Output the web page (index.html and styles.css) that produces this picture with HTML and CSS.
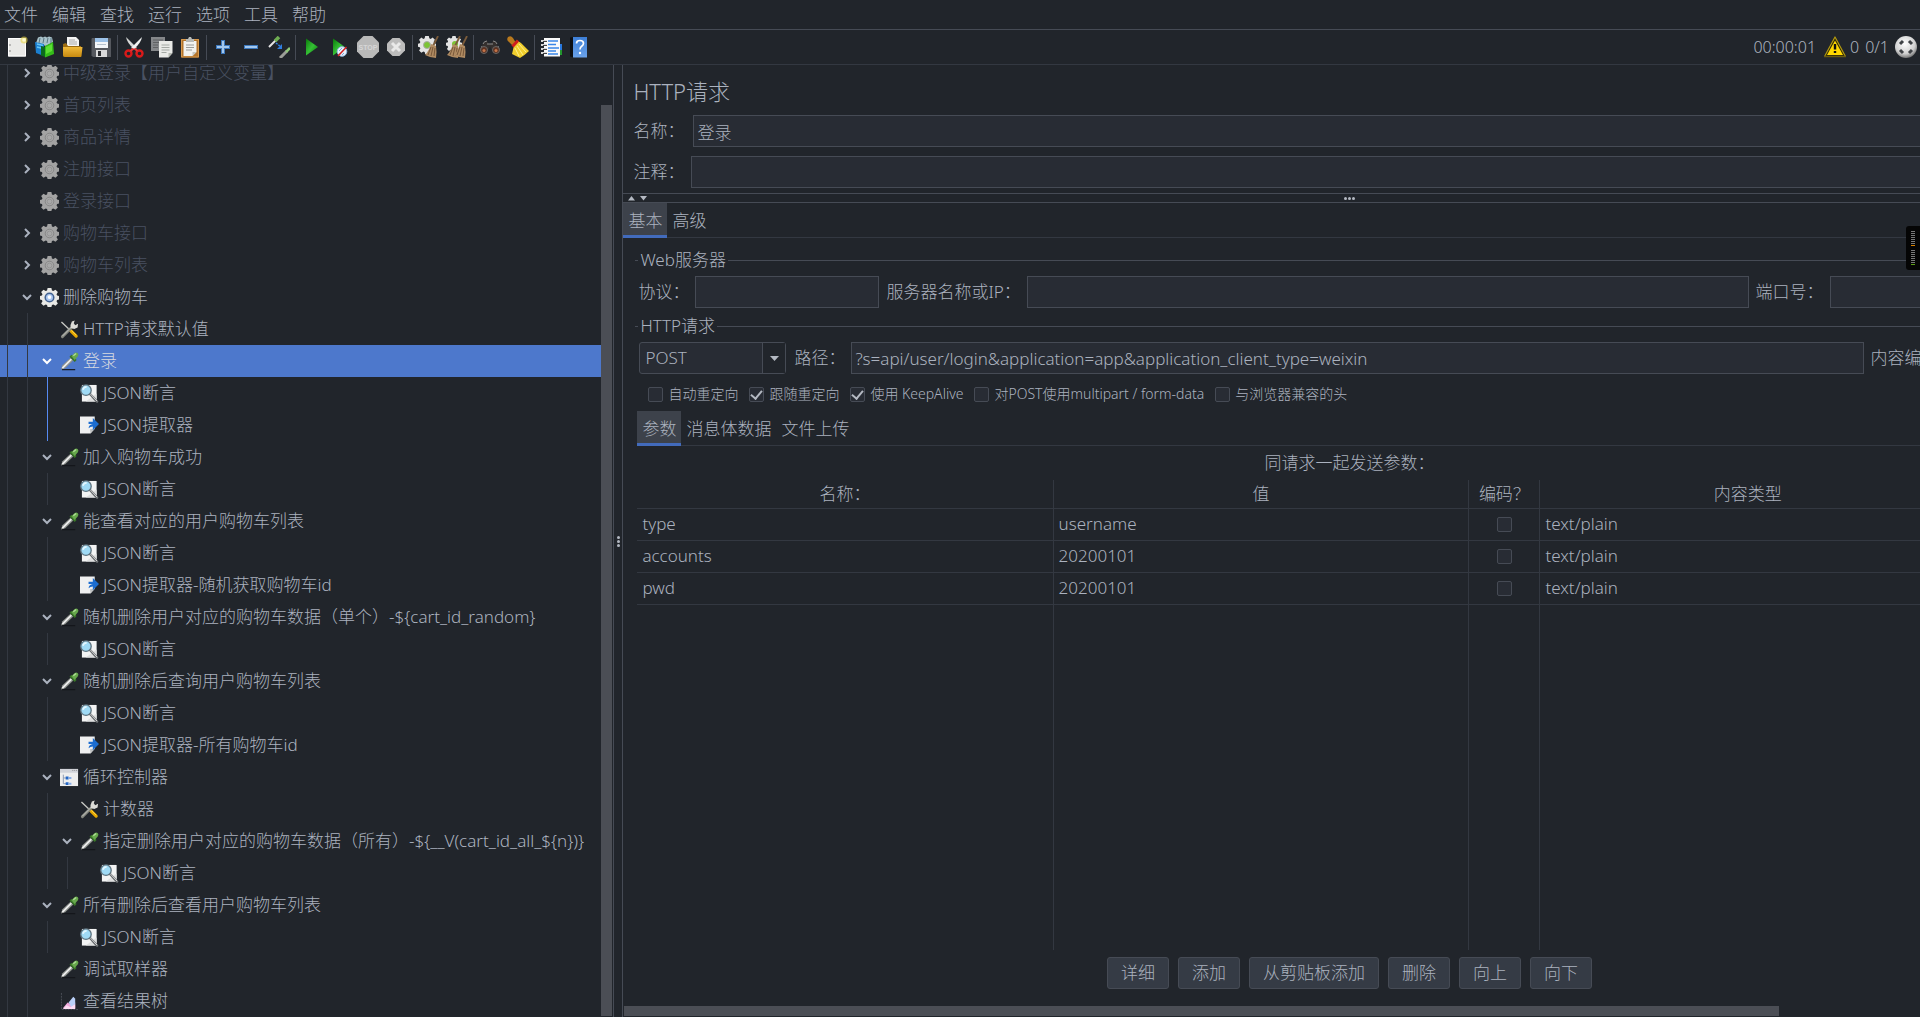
FILE: index.html
```html
<!DOCTYPE html>
<html lang="zh-CN">
<head>
<meta charset="utf-8">
<title>HTTP请求</title>
<link rel="stylesheet" href="styles.css">
</head>
<body>
<svg class="defs" aria-hidden="true">
  <defs>
    <linearGradient id="g-green" x1="0" y1="0" x2="1" y2="1"><stop offset="0" stop-color="#0a7a0a"/><stop offset=".5" stop-color="#35c035"/><stop offset="1" stop-color="#067506"/></linearGradient>
    <linearGradient id="g-blue" x1="0" y1="0" x2="0" y2="1"><stop offset="0" stop-color="#3d7fd6"/><stop offset="1" stop-color="#6aa2ea"/></linearGradient>
    <linearGradient id="g-gold" x1="0" y1="0" x2="0" y2="1"><stop offset="0" stop-color="#efb93a"/><stop offset="1" stop-color="#c78a10"/></linearGradient>
    <radialGradient id="g-ball" cx=".45" cy=".35" r=".65"><stop offset="0" stop-color="#fff"/><stop offset=".7" stop-color="#d0d0d0"/><stop offset="1" stop-color="#777"/></radialGradient>
    <symbol id="gear-shape" viewBox="0 0 20 20"><path d="M8 0h4l.6 2.600 1.400.6 2.300-1.400 2.500 2.500-1.400 2.300.6 1.400 2 .5v3.500l-2 .5-.6 1.400 1.400 2.300-2.500 2.500-2.300-1.400-1.400.6L12 20H8l-.6-2.100-1.400-.6-2.300 1.400-2.500-2.500 1.400-2.300-.6-1.400-2-.5V8.500L2 8l.6-1.400-1.400-2.300 2.500-2.500L6 3.200l1.400-.6z"/></symbol>
    <symbol id="i-gear-off" viewBox="0 0 20 20"><use href="#gear-shape" fill="#a3a3a3"/><circle cx="10" cy="10" r="4.500" fill="#a8a8a8" stroke="#858585"/><circle cx="10" cy="10" r="2.500" fill="none" stroke="#949494"/></symbol>
    <symbol id="i-gear" viewBox="0 0 20 20"><use href="#gear-shape" fill="#e9e9e6"/><circle cx="10" cy="10" r="4.500" fill="#a9c6f0" stroke="#42618f" stroke-width="1.600"/><circle cx="10" cy="9.500" r="2" fill="#fff"/></symbol>
    <symbol id="i-tools" viewBox="0 0 20 20"><path d="M1.500 2 11 11" stroke="#c9cac6" stroke-width="1.400"/><path d="m11.500 11.500 5.500 5.500" stroke="#e7a800" stroke-width="3.400" stroke-linecap="round"/><path d="m12 11 5 5" stroke="#ffd84a" stroke-width="1"/><path d="M2.500 17.500 13 7" stroke="#85877f" stroke-width="3" stroke-linecap="round"/><path d="M2.500 17 13 6.500" stroke="#c7c8c2" stroke-width="1"/><path d="m11 5.500 1.500-4 3-1-1 3 1.500 2 3-1.500-.5 4-3.500 1.500-3.500-1z" fill="#dcdcd8"/></symbol>
    <symbol id="i-pipette" viewBox="0 0 20 20"><path d="M2 18.600h14" stroke="#14161a" stroke-width="1.200"/><path d="M1 18.500 2.500 14 11 6l3 3-8.500 8z" fill="#8d918c"/><path d="m2.500 17 9.500-9.500" stroke="#eee" stroke-width="1.800"/><path d="m10 5 2-2 5.500 5.500-2 2z" fill="#377326"/><path d="m12 4.500 3.500-3.500q2-1 3.300.4 1.200 1.600 0 3.200L15.500 8.500z" fill="#67a84c"/><path d="m14 4 3-2.500" stroke="#b0dc98" stroke-width="1.400"/></symbol>
    <symbol id="i-assert" viewBox="0 0 20 20"><path d="M2 1h15.500v17.500H2z" fill="#f3f4f4"/><path d="M6 18.500 17.500 10v8.500z" fill="#dedfdf"/><path d="m10.500 10.500 7.500 8" stroke="#666a6d" stroke-width="2.600" stroke-linecap="round"/><path d="m11 10.500 7 7.500" stroke="#ddd" stroke-width="1"/><circle cx="6.300" cy="6.500" r="5.500" fill="#9fdaf5" stroke="#5f7480" stroke-width="1.400"/><path d="M3 6q1-3 4-3" stroke="#e4f7ff" stroke-width="1.800" fill="none"/></symbol>
    <symbol id="i-extract" viewBox="0 0 20 20"><path d="M0 .5h15.500v13L11 18.500H0z" fill="#eff0f0"/><path d="m15.500 13.500-4.500 5-.5-4.500z" fill="#bfc1c1"/><path d="M9 6h4.500V2l6.500 6.500-6.500 6.500v-4q-2.500 0-4.500 2 .5-4 4.500-4.500H9z" fill="#1c6dd0"/></symbol>
    <symbol id="i-loop" viewBox="0 0 20 20"><path d="M0 1h19v18H0z" fill="#eee"/><path d="M0 1h19v4H0z" fill="#d2d4da"/><path d="M13 2.500h1m1 0h1m1 0h1" stroke="#888"/><path d="M3.500 7v9.500h4M3.500 10.500h4" stroke="#8a99b3" fill="none"/><path d="M6 9h3v3H6zM6 15h3v3H6z" fill="#2467c5"/><path d="M9 10.500h3M9 16.500h3" stroke="#8aaee6" stroke-width="2"/></symbol>
    <symbol id="i-result" viewBox="0 0 20 20"><path d="M1.500 1v17.500H19" stroke="#4c5058" fill="none" stroke-dasharray="2 1"/><path d="m3 17 5-6 3 2 5-2v6z" fill="#f2a9dd"/><path d="m9 11 5-6 2 2v6l-4 3z" fill="#b9cff7"/><path d="m3 18 4-4 4 2 5-3v5z" fill="#fbdcf3"/></symbol>
    <symbol id="i-down" viewBox="0 0 14 14"><path d="m3 5 4 4 4-4" fill="none" stroke="currentColor" stroke-width="2"/></symbol>
    <symbol id="i-right" viewBox="0 0 14 14"><path d="m5 3 4 4-4 4" fill="none" stroke="currentColor" stroke-width="2"/></symbol>

    <symbol id="t-new" viewBox="0 0 22 22"><path d="M2 2h18v18.500H2z" fill="#e9e9e7"/><path d="M2.500 2.500h17v17.500h-17z" fill="none" stroke="#fff"/><path d="M4 8v2m0 4v2" stroke="#888"/><circle cx="18" cy="4" r="3.600" fill="#e9d74a" opacity=".6"/><circle cx="18" cy="4" r="1.800" fill="#fffbd0"/></symbol>
    <symbol id="t-templates" viewBox="0 0 22 22"><path d="M2 7 4 1.500l3-1 2 1 2-1 2 1 2-1 3 1 1 4.500-7 4z" fill="#a9c2ca"/><path d="m5 7 1-5m3 5 1-5m3 5 1-5m3 5V2" stroke="#5a7681"/><path d="M1 6l9 2v12L2 17z" fill="#1b7fd0"/><path d="m3 8 6 1.500M3 11l6 1.500" stroke="#66c5f5" stroke-width="1.500"/><path d="m7 10 4 1v10l-4-1.500z" fill="#0b6a1d"/><path d="m11 10 8-4 1 12-9 3.500z" fill="#35bd19"/><path d="m12 11 6-3v7l-6 3z" fill="#5ede35"/></symbol>
    <symbol id="t-open" viewBox="0 0 22 22"><path d="M5 1h9l3 3v9H5z" fill="#f4f4f4"/><path d="M7 4h6m-6 2h8m-8 2h8" stroke="#aaa"/><path d="M1 8l3-1 2 3h13v10q0 1-1 1H3q-2 0-2-2z" fill="#9c6c12"/><path d="M1 11h19.500l-1 9q0 1-1 1H3q-2 0-2-2z" fill="url(#g-gold)"/></symbol>
    <symbol id="t-save" viewBox="0 0 22 22"><path d="M2 2h18q1 0 1 1v18H3l-1.500-1.500V3z" fill="#55585e"/><path d="M5 2h13v10H5z" fill="#f3f6f9"/><path d="M5 2h13v4H5z" fill="#9cc2e8"/><path d="M7 8.500h9" stroke="#b7c3cf"/><path d="M6 14h11v7H6z" fill="#d9dadb"/><path d="M8 15h3v5H8z" fill="#2a2c30"/></symbol>
    <symbol id="t-cut" viewBox="0 0 22 22"><path d="M3 1q1 6 8 12l3-1Q8 6 3 1z" fill="#d7d9d8"/><path d="M19 1q-1 6-8 12l-3-1Q14 6 19 1z" fill="#f1f2f2"/><circle cx="5.500" cy="17.500" r="3" fill="none" stroke="#d81a1a" stroke-width="2.400"/><circle cx="16.500" cy="17.500" r="3" fill="none" stroke="#d81a1a" stroke-width="2.400"/><path d="m7.500 15 3-2.500m4 2.500-3-2.500" stroke="#e23434" stroke-width="2.200"/></symbol>
    <symbol id="t-copy" viewBox="0 0 22 22"><path d="M0 1h14v14H0z" fill="#85878a"/><path d="M2 4h10M2 6.500h6M2 9h5M2 11.500h5" stroke="#5f6163"/><path d="M8 5h13.500v12l-4 4.500H8z" fill="#e9eae7"/><path d="M10.500 9h8m-8 2.500h8m-8 2.500h8m-8 2.500h5" stroke="#a3a8a3"/><path d="m21.500 17-4 4.500V17z" fill="#b4b7b0"/></symbol>
    <symbol id="t-paste" viewBox="0 0 22 22"><path d="M2 3h18v18.500H2z" fill="#b4742a"/><path d="M2.500 3.500h17v17.500h-17z" fill="none" stroke="#d79a4f"/><path d="M4.500 5h13v11l-4 4h-9z" fill="#f2f2ef"/><path d="M7 9h8m-8 2.500h8M7 14h6" stroke="#9a9c99"/><path d="M7 3h2l1-2h2l1 2h2v3H7z" fill="#b9bbb8"/><path d="m17.500 16-4 4v-4z" fill="#c5c5bf"/></symbol>
    <symbol id="t-plus" viewBox="0 0 22 22"><path d="M9 4h4v5h5v4h-5v5H9v-5H4V9h5z" fill="#3c78bd"/><path d="M10 5h2v5h5v2h-5v5h-2v-5H5v-2h5z" fill="#a4c8ee"/></symbol>
    <symbol id="t-minus" viewBox="0 0 22 22"><path d="M4 9h14v4H4z" fill="#3c78bd"/><path d="M5 10h12v2H5z" fill="#a4c8ee"/></symbol>
    <symbol id="t-toggle" viewBox="0 0 22 22"><path d="m1 11 7-7" stroke="#e5e5e5" stroke-width="2"/><path d="m7 5 4-4" stroke="#6fae52" stroke-width="3.500"/><path d="m8 7 5 4" stroke="#2f7de0" stroke-width="1.500" stroke-dasharray="2 1"/><path d="m14 8v5H9z" fill="#2f7de0"/><path d="m12 22 7-7" stroke="#9b9d98" stroke-width="3"/><path d="m18 16 4-4" stroke="#8fc67a" stroke-width="2.500"/></symbol>
    <symbol id="t-play" viewBox="0 0 22 22"><path d="M5 2.500 17 11 5 19.500z" fill="url(#g-green)"/></symbol>
    <symbol id="t-playskip" viewBox="0 0 22 22"><path d="M4 2.500 16 11 4 19.500z" fill="url(#g-green)"/><circle cx="13" cy="15.500" r="4.800" fill="#e9f1fa" stroke="#8fb6df"/><path d="m9 20 8.500-9" stroke="#d32121" stroke-width="1.600"/><path d="m13 12-3 3m5 2-2 2" stroke="#7ba7db"/></symbol>
    <symbol id="t-stop" viewBox="0 0 22 22"><path d="M6.500 0h9L22 6.500v9L15.500 22h-9L0 15.500v-9z" fill="#b9b9b9"/><text x="11" y="14" text-anchor="middle" class="stop-text">STOP</text></symbol>
    <symbol id="t-shutdown" viewBox="0 0 22 22"><path d="M7.500 2h7L20 7.500v7L14.500 20h-7L2 14.500v-7z" fill="#bcbcbc"/><path d="m7 7 8 8m0-8-8 8" stroke="#e9e9e9" stroke-width="3"/></symbol>
    <symbol id="broom-head" viewBox="0 0 14 22"><path d="m13 0-5 10" stroke="#7b5b3a" stroke-width="1.800"/><path d="m6 8 5 2q1 6 0 12l-6-1-5-2q4-4 6-11z" fill="#b08b62"/><path d="m6 11-3 8m5-8-2 9m4-8-1 8" stroke="#78583a"/></symbol>
    <symbol id="t-clear" viewBox="0 0 22 22"><use href="#gear-shape" width="18" height="18" fill="#e4e4e4"/><circle cx="9" cy="9" r="3.500" fill="#7cc435" stroke="#aaa"/><use href="#broom-head" x="7" width="14" height="22"/></symbol>
    <symbol id="t-clearall" viewBox="0 0 22 22"><use href="#gear-shape" width="16" height="16" fill="#e4e4e4"/><circle cx="9" cy="8" r="3" fill="#7cc435"/><use href="#broom-head" x="1" width="14" height="22"/><use href="#broom-head" x="8" width="14" height="22"/></symbol>
    <symbol id="t-search" viewBox="0 0 22 22"><path d="m5 6 3-1 2 3h2l2-3 3 1 3 7-4 3-4-3-1-3-1 3-4 3-5-3z" fill="#35302e"/><path d="M4 8q1-3 4-3m10 3q-1-3-4-3M8 8h6M3 10l-1 3m17-3 1 3" stroke="#8c8c8c" fill="none"/><circle cx="5" cy="14" r="3.500" fill="#5b3222" stroke="#666"/><circle cx="17" cy="14" r="3.500" fill="#5b3222" stroke="#666"/><circle cx="5" cy="14.500" r="1.500" fill="#c5754a"/><circle cx="17" cy="14.500" r="1.500" fill="#c5754a"/></symbol>
    <symbol id="t-reset" viewBox="0 0 22 22"><path d="M1 1q3-2 5 1l3 5-3 3-4-4Q-1 4 1 1z" fill="#b9791d"/><path d="m7 9 4-4 3 2 8 8q-4 4-9 7L5 18q1-4 2-9z" fill="#f0ce2d"/><path d="m5.500 10.500 5.500-6" stroke="#d01e1e" stroke-width="3"/><path d="m10 10 6 9m-4-11 7 8m-11-4 4 8" stroke="#fff18a"/></symbol>
    <symbol id="t-log" viewBox="0 0 22 22"><path d="M19 8h3v7h-3z" fill="#2878dd"/><path d="M19 14h3v5h-3z" fill="#22962e"/><path d="M4 2h16v18.500H4z" fill="#fafafa"/><path d="M1 5h6M1 9h6M1 13h6M1 17h6" stroke="#d8d8d8" stroke-width="2"/><path d="M3 5.500h4m-4 4h4m-4 4h4m-4 4h4" stroke="#444"/><path d="M8 5h10M8 8.500h8M8 12h11M8 15h8M8 18h10" stroke="#3a86e8" stroke-width="1.300"/></symbol>
    <symbol id="t-help" viewBox="0 0 22 22"><path d="M2 1.500 6 1v20.500l-4-1z" fill="#0d0f12"/><path d="M5 1h14v20.500H5z" fill="url(#g-blue)"/><path d="M8.500 7.500q0-3 3.500-3t3.500 2.800q0 1.700-1.800 2.900-1.700 1.100-1.700 3.300" fill="none" stroke="#fff" stroke-width="1.700"/><circle cx="12" cy="17" r="1.200" fill="#fff"/></symbol>
    <symbol id="t-warn" viewBox="0 0 22 22"><path d="M11 1 21.500 20.500H.5z" fill="#2b2607" stroke="#b39a10" stroke-width="1.200" stroke-linejoin="round"/><path d="M11 4.500 19 19H3z" fill="#ffd800"/><path d="M0 20.500h22" stroke="#6b5c10" stroke-width="1.500"/><path d="M11 8v5.500m0 1.500v2" stroke="#111" stroke-width="2.400"/></symbol>
    <symbol id="t-expand" viewBox="0 0 22 22"><circle cx="11" cy="11" r="11" fill="url(#g-ball)"/><path d="m5 8 3-3m6 0 3 3m0 6-3 3m-6 0-3-3" stroke="#3f4246" stroke-width="3"/></symbol>
  </defs>
</svg>

<nav class="menubar">
  <button>文件</button><button>编辑</button><button>查找</button><button>运行</button><button>选项</button><button>工具</button><button>帮助</button>
</nav>

<div class="toolbar">
  <button aria-label="新建"><svg><use href="#t-new"/></svg></button>
  <button aria-label="模板"><svg><use href="#t-templates"/></svg></button>
  <button aria-label="打开"><svg><use href="#t-open"/></svg></button>
  <button aria-label="保存"><svg><use href="#t-save"/></svg></button>
  <span class="sep"></span>
  <button aria-label="剪切"><svg><use href="#t-cut"/></svg></button>
  <button aria-label="复制"><svg><use href="#t-copy"/></svg></button>
  <button aria-label="粘贴"><svg><use href="#t-paste"/></svg></button>
  <span class="sep"></span>
  <button aria-label="全部展开"><svg><use href="#t-plus"/></svg></button>
  <button aria-label="全部折叠"><svg><use href="#t-minus"/></svg></button>
  <button aria-label="切换"><svg><use href="#t-toggle"/></svg></button>
  <span class="sep"></span>
  <button aria-label="启动"><svg><use href="#t-play"/></svg></button>
  <button aria-label="不停顿开始"><svg><use href="#t-playskip"/></svg></button>
  <button aria-label="停止"><svg><use href="#t-stop"/></svg></button>
  <button aria-label="关闭"><svg><use href="#t-shutdown"/></svg></button>
  <span class="sep"></span>
  <button aria-label="清除"><svg><use href="#t-clear"/></svg></button>
  <button aria-label="清除全部"><svg><use href="#t-clearall"/></svg></button>
  <span class="sep"></span>
  <button aria-label="搜索"><svg><use href="#t-search"/></svg></button>
  <button aria-label="重置搜索"><svg><use href="#t-reset"/></svg></button>
  <span class="sep"></span>
  <button aria-label="函数助手"><svg><use href="#t-log"/></svg></button>
  <button aria-label="帮助"><svg><use href="#t-help"/></svg></button>
  <div class="status">
    <span class="clock">00:00:01</span>
    <button aria-label="警告"><svg><use href="#t-warn"/></svg></button>
    <span>0</span>
    <span class="threads">0/1</span>
    <svg><use href="#t-expand"/></svg>
  </div>
</div>

<main class="workspace">
  <aside class="tree-pane">
    <ul class="tree">
      <li class="off"><i></i><button aria-label="展开"><svg><use href="#i-right"/></svg></button><svg class="icon"><use href="#i-gear-off"/></svg>中级登录【用户自定义变量】</li>
      <li class="off"><i></i><button aria-label="展开"><svg><use href="#i-right"/></svg></button><svg class="icon"><use href="#i-gear-off"/></svg>首页列表</li>
      <li class="off"><i></i><button aria-label="展开"><svg><use href="#i-right"/></svg></button><svg class="icon"><use href="#i-gear-off"/></svg>商品详情</li>
      <li class="off"><i></i><button aria-label="展开"><svg><use href="#i-right"/></svg></button><svg class="icon"><use href="#i-gear-off"/></svg>注册接口</li>
      <li class="off"><i></i><span class="leaf"></span><svg class="icon"><use href="#i-gear-off"/></svg>登录接口</li>
      <li class="off"><i></i><button aria-label="展开"><svg><use href="#i-right"/></svg></button><svg class="icon"><use href="#i-gear-off"/></svg>购物车接口</li>
      <li class="off"><i></i><button aria-label="展开"><svg><use href="#i-right"/></svg></button><svg class="icon"><use href="#i-gear-off"/></svg>购物车列表</li>
      <li><i></i><button aria-label="折叠"><svg><use href="#i-down"/></svg></button><svg class="icon"><use href="#i-gear"/></svg>删除购物车</li>
      <li><i></i><i></i><span class="leaf"></span><svg class="icon"><use href="#i-tools"/></svg>HTTP请求默认值</li>
      <li class="selected"><i></i><i></i><button aria-label="折叠"><svg><use href="#i-down"/></svg></button><svg class="icon"><use href="#i-pipette"/></svg>登录</li>
      <li><i></i><i></i><i class="active"></i><span class="leaf"></span><svg class="icon"><use href="#i-assert"/></svg>JSON断言</li>
      <li><i></i><i></i><i class="active"></i><span class="leaf"></span><svg class="icon"><use href="#i-extract"/></svg>JSON提取器</li>
      <li><i></i><i></i><button aria-label="折叠"><svg><use href="#i-down"/></svg></button><svg class="icon"><use href="#i-pipette"/></svg>加入购物车成功</li>
      <li><i></i><i></i><i></i><span class="leaf"></span><svg class="icon"><use href="#i-assert"/></svg>JSON断言</li>
      <li><i></i><i></i><button aria-label="折叠"><svg><use href="#i-down"/></svg></button><svg class="icon"><use href="#i-pipette"/></svg>能查看对应的用户购物车列表</li>
      <li><i></i><i></i><i></i><span class="leaf"></span><svg class="icon"><use href="#i-assert"/></svg>JSON断言</li>
      <li><i></i><i></i><i></i><span class="leaf"></span><svg class="icon"><use href="#i-extract"/></svg>JSON提取器-随机获取购物车id</li>
      <li><i></i><i></i><button aria-label="折叠"><svg><use href="#i-down"/></svg></button><svg class="icon"><use href="#i-pipette"/></svg>随机删除用户对应的购物车数据（单个）-${cart_id_random}</li>
      <li><i></i><i></i><i></i><span class="leaf"></span><svg class="icon"><use href="#i-assert"/></svg>JSON断言</li>
      <li><i></i><i></i><button aria-label="折叠"><svg><use href="#i-down"/></svg></button><svg class="icon"><use href="#i-pipette"/></svg>随机删除后查询用户购物车列表</li>
      <li><i></i><i></i><i></i><span class="leaf"></span><svg class="icon"><use href="#i-assert"/></svg>JSON断言</li>
      <li><i></i><i></i><i></i><span class="leaf"></span><svg class="icon"><use href="#i-extract"/></svg>JSON提取器-所有购物车id</li>
      <li><i></i><i></i><button aria-label="折叠"><svg><use href="#i-down"/></svg></button><svg class="icon"><use href="#i-loop"/></svg>循环控制器</li>
      <li><i></i><i></i><i></i><span class="leaf"></span><svg class="icon"><use href="#i-tools"/></svg>计数器</li>
      <li><i></i><i></i><i></i><button aria-label="折叠"><svg><use href="#i-down"/></svg></button><svg class="icon"><use href="#i-pipette"/></svg>指定删除用户对应的购物车数据（所有）-${__V(cart_id_all_${n})}</li>
      <li><i></i><i></i><i></i><i></i><span class="leaf"></span><svg class="icon"><use href="#i-assert"/></svg>JSON断言</li>
      <li><i></i><i></i><button aria-label="折叠"><svg><use href="#i-down"/></svg></button><svg class="icon"><use href="#i-pipette"/></svg>所有删除后查看用户购物车列表</li>
      <li><i></i><i></i><i></i><span class="leaf"></span><svg class="icon"><use href="#i-assert"/></svg>JSON断言</li>
      <li><i></i><i></i><span class="leaf"></span><svg class="icon"><use href="#i-pipette"/></svg>调试取样器</li>
      <li><i></i><i></i><span class="leaf"></span><svg class="icon"><use href="#i-result"/></svg>查看结果树</li>
    </ul>
    <div class="vscroll"><div class="thumb"></div></div>
  </aside>
  <div class="divider"><span class="dots column"><b></b><b></b><b></b></span></div>

  <section class="editor">
    <form class="content">
      <h1>HTTP请求</h1>
      <div class="field name"><label for="name">名称：</label><input id="name" value="登录"></div>
      <div class="field comment"><label for="comment">注释：</label><input id="comment"></div>
      <div class="splitter">
        <svg class="arrows" viewBox="0 0 24 8"><path d="M2 6.500h7L5.500 2zM14 2h7l-3.500 4.500z" fill="#b4b9c2"/></svg>
        <span class="dots"><b></b><b></b><b></b></span>
      </div>
      <div class="tabs"><button type="button" class="current">基本</button><button type="button">高级</button></div>

      <div class="body">
        <fieldset>
          <legend>Web服务器</legend>
          <div class="line server">
            <label for="protocol">协议：</label><input id="protocol">
            <label for="host">服务器名称或IP：</label><input id="host">
            <label for="port">端口号：</label><input id="port">
          </div>
        </fieldset>
        <fieldset>
          <legend>HTTP请求</legend>
          <div class="line request">
            <span class="combo"><select aria-label="方法"><option>POST</option></select><svg viewBox="0 0 22 30"><path d="M7 13h9l-4.500 5z" fill="#b4b9c2"/></svg></span>
            <label for="path">路径：</label><input id="path" value="?s=api/user/login&amp;application=app&amp;application_client_type=weixin">
            <label for="encoding">内容编码：</label><input id="encoding">
          </div>
        </fieldset>
        <div class="checks">
          <label><input type="checkbox">自动重定向</label>
          <label><input type="checkbox" checked>跟随重定向</label>
          <label><input type="checkbox" checked>使用 KeepAlive</label>
          <label><input type="checkbox">对POST使用multipart / form-data</label>
          <label><input type="checkbox">与浏览器兼容的头</label>
        </div>
        <div class="tabs inner"><button type="button" class="current">参数</button><button type="button">消息体数据</button><button type="button">文件上传</button></div>
        <p class="caption">同请求一起发送参数：</p>
        <div class="grid">
          <table>
            <colgroup><col class="c-name"><col class="c-value"><col class="c-encode"><col class="c-type"><col></colgroup>
            <thead><tr><th>名称：</th><th>值</th><th>编码？</th><th>内容类型</th><th></th></tr></thead>
            <tbody>
              <tr><td>type</td><td>username</td><td class="tick"><input type="checkbox" aria-label="编码 type"></td><td>text/plain</td><td></td></tr>
              <tr><td>accounts</td><td>20200101</td><td class="tick"><input type="checkbox" aria-label="编码 accounts"></td><td>text/plain</td><td></td></tr>
              <tr><td>pwd</td><td>20200101</td><td class="tick"><input type="checkbox" aria-label="编码 pwd"></td><td>text/plain</td><td></td></tr>
              <tr class="rest"><td></td><td></td><td></td><td></td><td></td></tr>
            </tbody>
          </table>
        </div>
        <div class="actions">
          <button type="button">详细</button><button type="button">添加</button><button type="button">从剪贴板添加</button><button type="button">删除</button><button type="button">向上</button><button type="button">向下</button>
        </div>
      </div>
    </form>
    <div class="hscroll"><div class="thumb"></div></div>
  </section>
</main>
<div class="meter"><span class="bars orange"></span><span class="bars green"></span></div>
</body>
</html>
```
FILE: styles.css
```css
:root {
  --bg: #21252b;
  --field: #282c34;
  --border: #464b55;
  --line: #333841;
  --text: #abb2bf;
  --muted: #495162;
  --accent: #4d78cc;
}

* { box-sizing: border-box; }

body {
  margin: 0;
  height: 100vh;
  display: flex;
  flex-direction: column;
  overflow: hidden;
  background: var(--bg);
  color: var(--text);
  font: 300 17px/24px "Noto Sans", "Noto Sans CJK SC", sans-serif;
}

button, input, select { font: inherit; color: inherit; }
button { padding: 0; border: 0; background: none; }
svg { display: block; flex: none; }
.defs { position: absolute; width: 0; height: 0; }
.stop-text { font: bold 7px "Liberation Sans", sans-serif; fill: #d6d6d6; }

.menubar {
  display: flex;
  gap: 14px;
  height: 30px;
  padding: 0 4px;
  border-bottom: 1px solid var(--border);
}

.toolbar {
  display: flex;
  align-items: center;
  height: 35px;
  padding: 0 3px;
  border-bottom: 1px solid var(--line);
}
.toolbar svg { width: 22px; height: 22px; }
.toolbar > button { width: 28px; padding: 0 3px; }
.toolbar .sep { width: 1px; height: 25px; margin: 0 2px; background: var(--border); }
.status { display: flex; align-items: center; gap: 4px; margin-left: auto; font-size: 16px; line-height: 26px; }
.status .clock { margin-right: 4px; }
.status .threads { margin: 0 2px; }

.workspace { flex: 1; min-height: 0; display: flex; }
.tree-pane { flex: none; width: 32%; display: flex; border-right: 1px solid var(--border); overflow: hidden; }
.tree { flex: 1; min-width: 0; margin: -8px 0 0; padding: 0; list-style: none; }
.tree li { display: flex; align-items: center; height: 32px; padding-left: 7px; white-space: nowrap; }
.tree i { align-self: stretch; width: 20px; border-left: 1px solid var(--line); }
.tree i.active { border-color: #568af2; }
.tree button, .tree .leaf { width: 14px; margin: 0 6px 0 -7px; }
.tree button svg { width: 14px; height: 14px; }
.tree .icon { width: 19px; height: 19px; margin-right: 4px; }
.tree .off { color: var(--muted); }
.tree .off button { color: var(--text); }
.tree .selected { background: var(--accent); color: #d7dae0; }
.tree .selected button { color: #fff; }
.vscroll { width: 12px; padding: 40px 1px 1px 0; display: flex; }
.vscroll .thumb { flex: 1; background: #4b4e55; }

.divider { flex: none; width: 9px; display: flex; align-items: center; justify-content: center; border-right: 1px solid var(--border); }
.dots { display: flex; gap: 1px; }
.dots.column { flex-direction: column; }
.dots b { width: 3px; height: 3px; border-radius: 2px; background: #b4b9c2; }

.editor { flex: 1; min-width: 0; display: flex; flex-direction: column; overflow: hidden; }
.content { flex: 1; min-height: 0; width: 112%; display: flex; flex-direction: column; }
h1 { margin: 10px 10px 8px; font-size: 22px; font-weight: 300; line-height: 32px; }
.field { display: flex; align-items: center; padding-left: 10px; margin-bottom: 9px; }
.field label { width: 60px; }
.comment { margin-bottom: 5px; }
.comment label { width: 58px; }
input:not([type]) , .combo {
  flex: 1;
  min-width: 0;
  height: 32px;
  padding: 0 3px;
  border: 1px solid var(--border);
  border-radius: 0;
  background: var(--field);
  outline: 0;
}
.splitter {
  display: flex;
  align-items: center;
  justify-content: center;
  position: relative;
  height: 10px;
  border: solid var(--border);
  border-width: 1px 0;
}
.arrows { position: absolute; left: 3px; top: 0; width: 24px; height: 8px; }

.tabs { display: flex; height: 35px; border-bottom: 1px solid var(--line); }
.tabs button { height: 35px; padding: 0 5px; }
.tabs .current { background: #3d424b; border-bottom: 3px solid #426bbc; padding-top: 3px; }

.body { flex: 1; min-height: 0; display: flex; flex-direction: column; padding: 10px 14px 0; }
fieldset { min-width: 0; margin: 0 -2px 6px; padding: 0; border: 0; }
legend { display: flex; align-items: center; gap: 2px; width: 100%; padding: 0; white-space: nowrap; }
legend::before, legend::after { content: ""; height: 1px; background: var(--border); }
legend::before { width: 3px; }
legend::after { flex: 1; }
.line { display: flex; align-items: center; padding: 4px 4px 0; white-space: nowrap; }
.line label { margin-right: 6px; }
.line input + label { margin-left: 7px; }
.server { padding-left: 3px; }
.server #protocol { flex: none; width: 184px; }
.server #host { flex: 1; }
.server #port { flex: none; width: 230px; }
.request #encoding { flex: none; width: 98px; }
.request .combo { flex: none; display: flex; width: 147px; padding: 0; border-radius: 3px; margin-right: 8px; }
.combo select { flex: 1; appearance: none; border: 0; background: none; padding: 0 5px; outline: 0; }
.combo svg { width: 23px; height: 30px; border-left: 1px solid var(--border); background: var(--bg); }

.checks { display: flex; gap: 11px; padding: 4px 11px 7px; font-size: 14px; line-height: 20px; }
.checks label { display: flex; align-items: center; gap: 5px; white-space: nowrap; }
input[type="checkbox"] {
  appearance: none;
  flex: none;
  width: 15px;
  height: 15px;
  margin: 0;
  border: 1px solid var(--border);
  border-radius: 2px;
  background: var(--field);
  display: grid;
  place-items: center;
}
input[type="checkbox"]:checked::before {
  content: "";
  width: 5px;
  height: 9px;
  margin-bottom: 2px;
  border: solid #b4b9c2;
  border-width: 0 2px 2px 0;
  transform: rotate(40deg);
}

.caption { margin: 5px 0; text-align: center; }
.grid { flex: 1; min-height: 0; }
table { width: 100%; height: 100%; border-collapse: collapse; table-layout: fixed; }
.c-name, .c-value, .c-type { width: 29.2%; }
.c-encode { width: 5%; }
th { height: 28px; padding: 0; font-weight: 300; }
th, td { border: 1px solid var(--line); border-width: 0 1px 1px 0; }
td { height: 32px; padding: 0 5px; }
.tick input { margin: 0 auto; }
.rest td { height: auto; border-bottom: 0; }
.actions { display: flex; justify-content: center; gap: 9px; padding: 7px 0 17px; }
.actions button { height: 32px; padding: 0 13px; border: 1px solid var(--border); border-radius: 3px; background: #353b45; }

.hscroll { height: 11px; padding: 0 0 1px 1px; }
.hscroll .thumb { width: 89.1%; height: 10px; background: #4b4e55; }

/* level meter floating at the window's right edge */
.meter {
  position: absolute;
  right: 0;
  top: 226px;
  width: 14px;
  height: 44px;
  padding: 5px;
  display: flex;
  flex-direction: column;
  gap: 4px;
  border-radius: 3px 0 0 3px;
  background: #050505;
}
.bars { width: 4px; height: 15px; background: repeating-linear-gradient(#777 0 1px, #050505 1px 2px); border-bottom: 1px solid; }
.orange { color: #d98200; }
.green { color: #5f9e18; }
```
